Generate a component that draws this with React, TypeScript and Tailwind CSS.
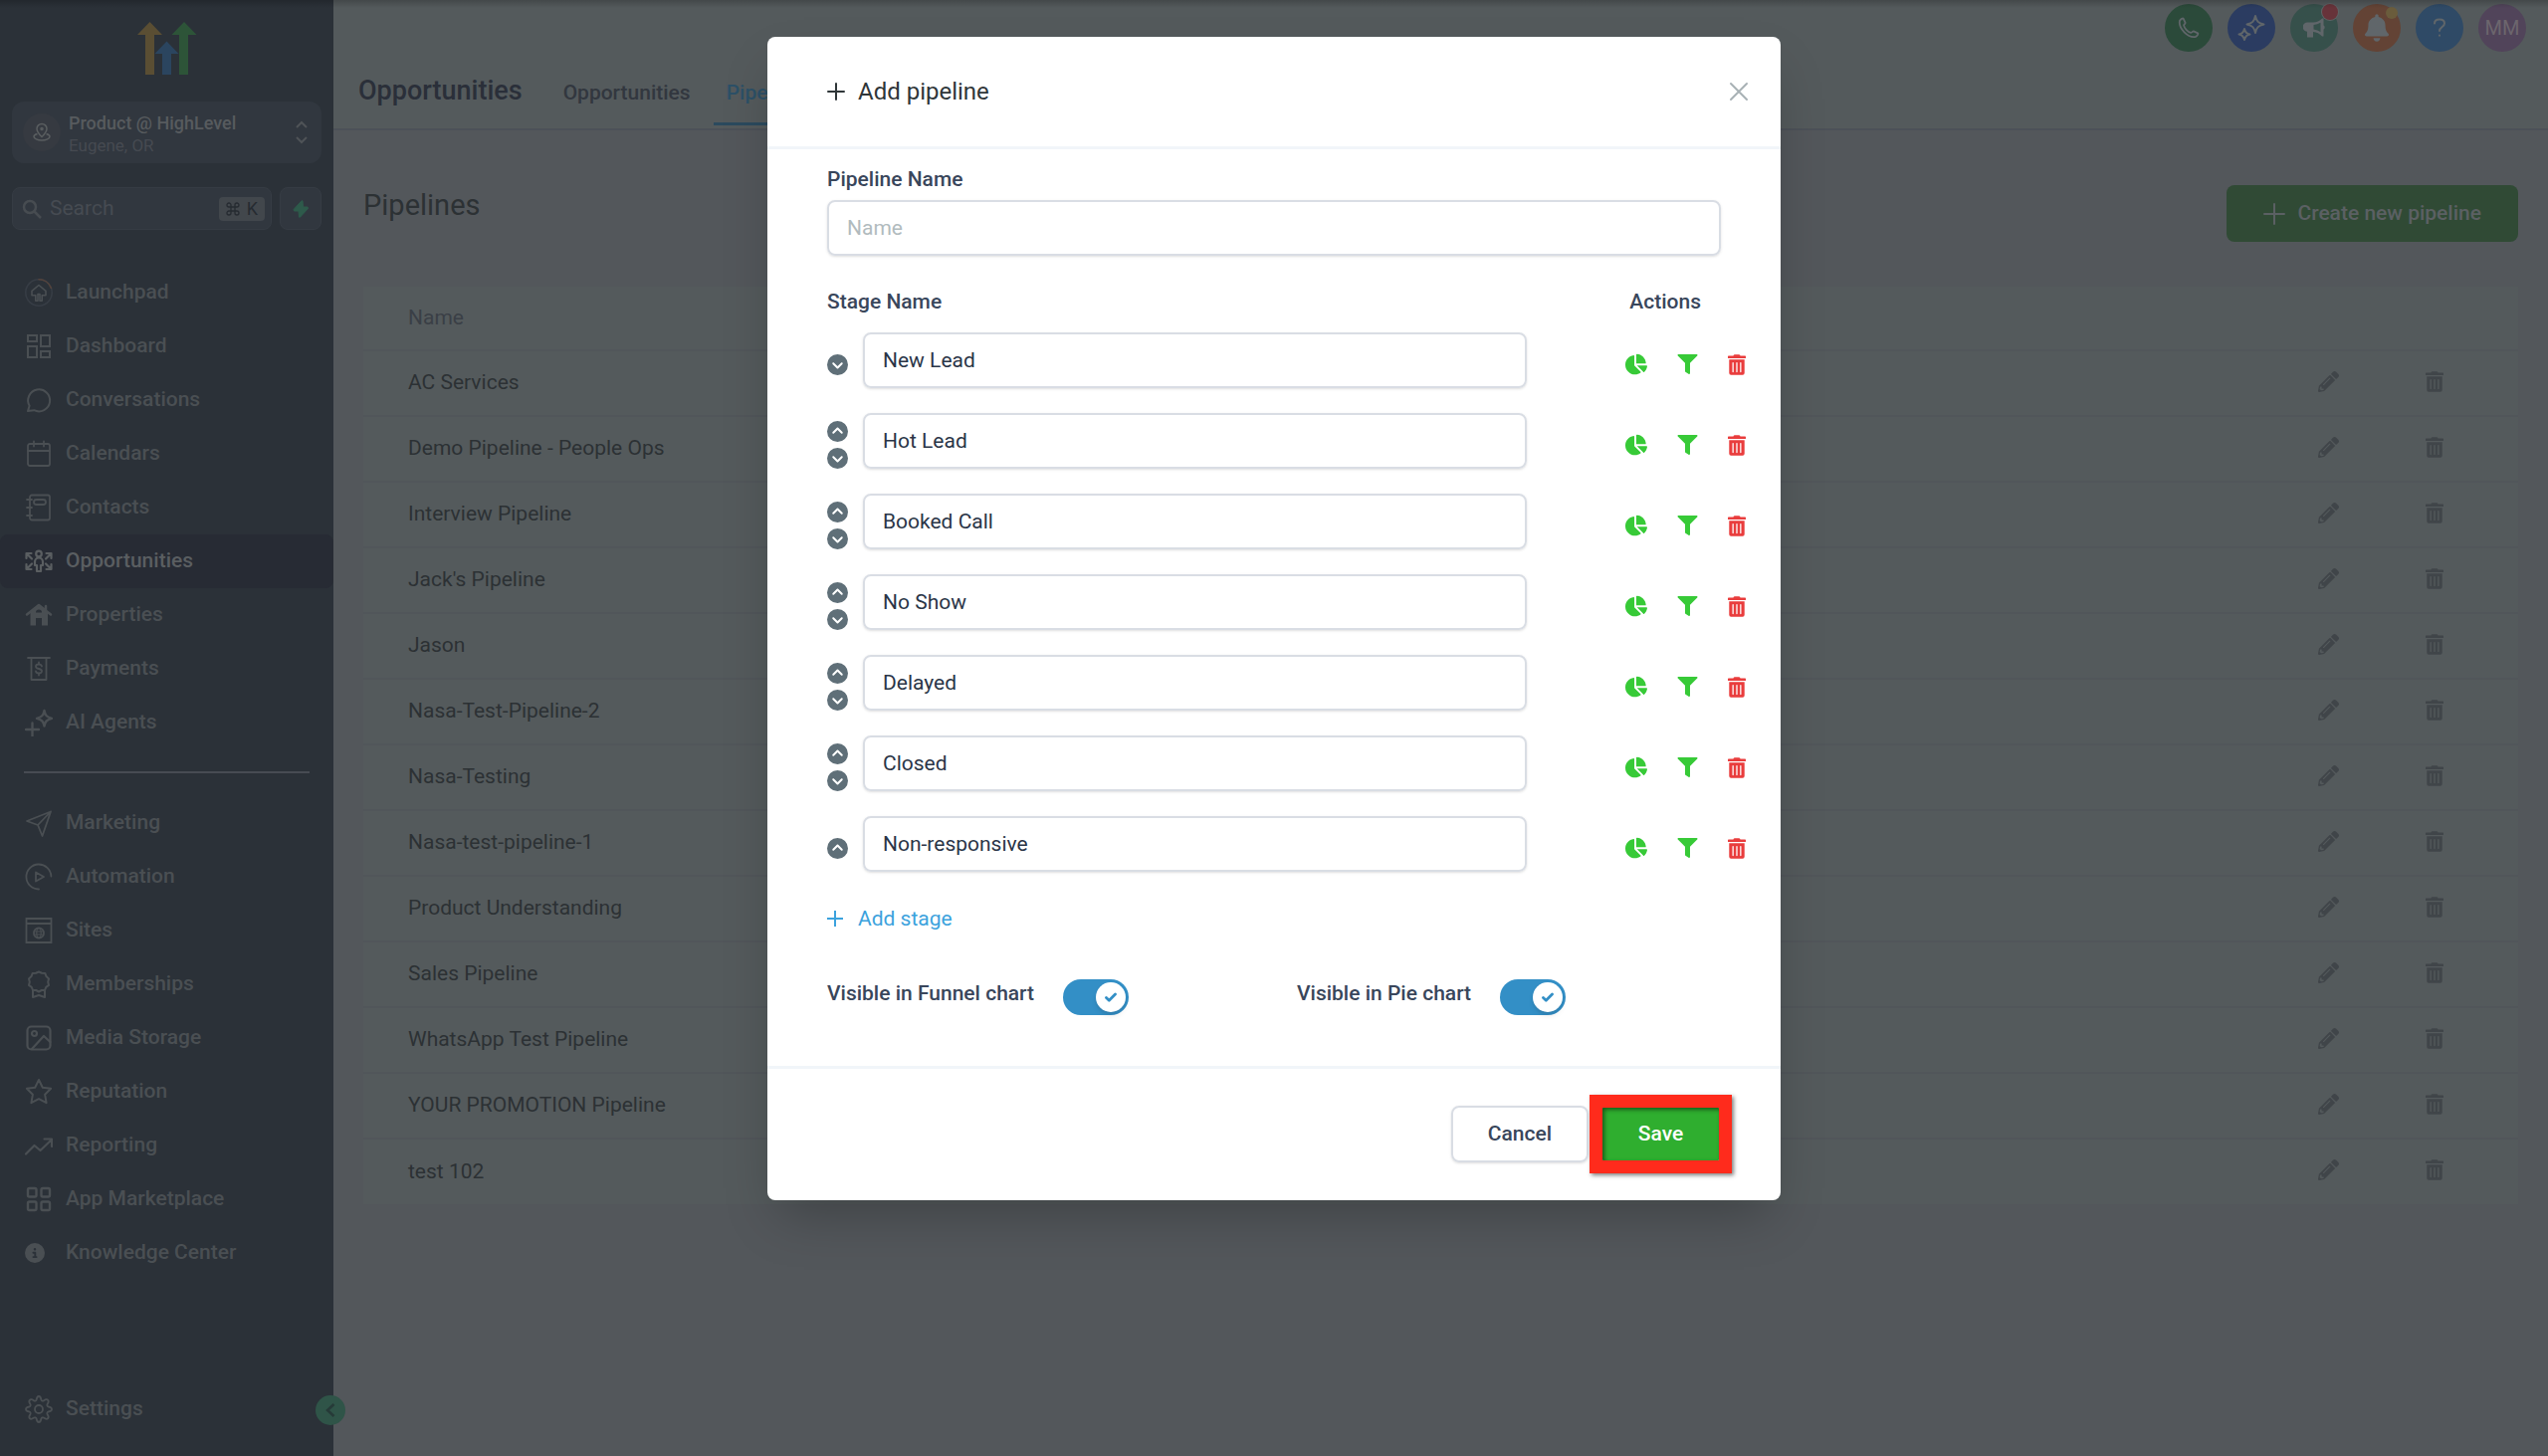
import React, { useState } from 'react';
import { FaCircleChevronDown, FaCircleChevronUp, FaCircleInfo } from 'react-icons/fa6';
import { FaChartPie, FaFilter, FaTrashAlt, FaPencilAlt, FaBell } from 'react-icons/fa';

const Icon: React.FC<{ children: React.ReactNode; width?: number }> = ({ children, width = 2 }) => (
    <svg viewBox="0 0 28 28" className="w-7 h-7 shrink-0" fill="none" stroke="currentColor" strokeWidth={width} strokeLinejoin="round" strokeLinecap="round" aria-hidden="true">
        {children}
    </svg>
);

interface NavItem {
    label: string;
    icon: React.ReactNode;
}

const mainNav: NavItem[] = [
    {
        label: 'Launchpad',
        icon: (
            <Icon width={1.6}>
                <circle cx="14" cy="14" r="13.2" stroke="#373d45" />
                <path d="M14 .8a13.2 13.2 0 0 1 12.300 8.500" stroke="#54433c" />
                <path d="M14 6.500 7 12.400v4.400h3.800v5.400h2.200v-6.600h2v6.600h2.200v-5.400H21v-4.400z" />
            </Icon>
        ),
    },
    {
        label: 'Dashboard',
        icon: (
            <Icon>
                <path strokeLinejoin="miter" d="M3 3h9v6H3zM16 3h9v11h-9zM3 14h9v11H3zM16 19h9v6h-9z" />
            </Icon>
        ),
    },
    {
        label: 'Conversations',
        icon: (
            <Icon>
                <path d="M3 25l1.600-5.200A11 11 0 1 1 9.200 24.200z" />
            </Icon>
        ),
    },
    {
        label: 'Calendars',
        icon: (
            <Icon width={1.8}>
                <rect x="3" y="4" width="22" height="22" rx="2" />
                <path d="M3 11h22M9 1.500v5M19 1.500v5" />
            </Icon>
        ),
    },
    {
        label: 'Contacts',
        icon: (
            <Icon width={1.8}>
                <rect x="5" y="1.500" width="20" height="25" rx="2" />
                <rect x="9" y="6" width="12" height="5" rx="2.500" />
                <path d="M2 6h5M2 14h5M2 22h5" />
            </Icon>
        ),
    },
    {
        label: 'Opportunities',
        icon: (
            <Icon width={2.2}>
                <circle cx="14" cy="6.500" r="2.800" />
                <path d="M12 24v-6h-2v-3.500a4 4 0 0 1 8 0V18h-2v6z" />
                <path d="M1.500 11V6h5M2 6.500l5 5M26.500 11V6h-5M26 6.500l-5 5M1.500 17v5h5M2 21.500l5-5M26.500 17v5h-5M26 21.500l-5-5" />
            </Icon>
        ),
    },
    {
        label: 'Properties',
        icon: (
            <Icon width={1.8}>
                <path d="M2 13.500 14 4l12 9.500M21 5v5" strokeWidth="2.500" />
                <path fill="currentColor" fillRule="evenodd" stroke="none" d="M14 4.500 5.500 11v13.500H11V17h6v7.500h6V11zm0 4a3 3 0 0 1 3 3h-6a3 3 0 0 1 3-3z" />
            </Icon>
        ),
    },
    {
        label: 'Payments',
        icon: (
            <Icon width={1.8}>
                <path d="M3 3h22M6.500 3v22h15V3" />
                <path d="M17 11.500c-.4-1.400-1.500-2-3-2-1.800 0-3 .8-3 2.200 0 3.200 6 1.400 6 4.600 0 1.400-1.200 2.200-3 2.200-1.500 0-2.700-.6-3-2M14 7.500v2M14 18.500v2" />
            </Icon>
        ),
    },
    {
        label: 'AI Agents',
        icon: (
            <Icon width={2.4}>
                <path d="M19.500 2c1 5 2.500 6.500 7.500 7.800-5 1.300-6.500 2.800-7.500 7.800-1-5-2.500-6.500-7.500-7.800 5-1.300 6.500-2.800 7.500-7.800zM1 21h13M7.500 14.500v13" />
            </Icon>
        ),
    },
];

const moreNav: NavItem[] = [
    {
        label: 'Marketing',
        icon: (
            <Icon width={1.8}>
                <path d="M2 12 26 2.500 17.500 27l-4.500-11zM26 2.500 13 16" />
            </Icon>
        ),
    },
    {
        label: 'Automation',
        icon: (
            <Icon width={1.8}>
                <path d="M14 26.500a12.500 12.500 0 1 1 12.400-13M11 9.500l8 4.500-8 4.500z" />
            </Icon>
        ),
    },
    {
        label: 'Sites',
        icon: (
            <Icon width={1.8}>
                <path strokeLinejoin="miter" d="M1.500 2h25v24h-25zM1.500 7h25" />
                <circle cx="14" cy="16.500" r="5" />
                <ellipse cx="14" cy="16.500" rx="2.200" ry="5" strokeWidth="1.200" />
                <path strokeWidth="1.200" d="M9 15h10M9 18h10" />
            </Icon>
        ),
    },
    {
        label: 'Memberships',
        icon: (
            <Icon>
                <path d="M14 1.500l3 1.200 3.300.2 1.200 3.200 2.500 2.300-.8 3.300.8 3.200-2.700 2-1.300 3-3.200.1L14 21.500l-2.800-1.500-3.200-.1-1.300-3-2.700-2 .8-3.200-.8-3.300 2.500-2.300 1.200-3.200 3.300-.2zM8 20v7l6-2 6 2v-7" />
            </Icon>
        ),
    },
    {
        label: 'Media Storage',
        icon: (
            <Icon width={2.2}>
                <rect x="2.500" y="2.500" width="23" height="23" rx="4" />
                <circle cx="9.500" cy="9.500" r="2.500" />
                <path d="M7 25l12-13 6.500 6" />
            </Icon>
        ),
    },
    {
        label: 'Reputation',
        icon: (
            <Icon>
                <path d="M14 2l3.800 7.700 8.300 1.100-6 5.900 1.500 8.500L14 21.200l-7.600 4 1.500-8.500-6-5.900 8.300-1.100z" />
            </Icon>
        ),
    },
    {
        label: 'Reporting',
        icon: (
            <Icon width={2.2}>
                <path d="M1 22.500l8.500-8.500 6 5L27 8M19.500 7.500H27V15" />
            </Icon>
        ),
    },
    {
        label: 'App Marketplace',
        icon: (
            <Icon width={2.4}>
                <rect x="3" y="3" width="8.500" height="8.500" rx="1.500" />
                <rect x="16.500" y="3" width="8.500" height="8.500" rx="1.500" />
                <rect x="3" y="16.500" width="8.500" height="8.500" rx="1.500" />
                <rect x="16.500" y="16.500" width="8.500" height="8.500" rx="1.500" />
            </Icon>
        ),
    },
    { label: 'Knowledge Center', icon: <span className="w-7 shrink-0"><FaCircleInfo className="w-5 h-5" /></span> },
];

const settings: NavItem = {
    label: 'Settings',
    icon: (
        <Icon width={1.8}>
            <circle cx="14" cy="14" r="4" />
            <path d="M11.600 4.500C12 2 12.700 1 14 1s2 1 2.400 3.500c.3 1 1.500 1.500 2.400.9C21 3.800 22.200 3.600 23.200 4.800c.9 1 .8 2.200-.7 4.300-.5.900 0 2.100 1 2.400 2.600.4 3.500 1.200 3.500 2.500s-.9 2.100-3.500 2.500c-1 .3-1.500 1.500-1 2.400 1.500 2.100 1.600 3.300.7 4.300-1 1.200-2.200 1-4.400-.6-.9-.6-2.100-.1-2.400.9C16 26 15.300 27 14 27s-2-1-2.400-3.500c-.3-1-1.500-1.500-2.400-.9-2.200 1.600-3.400 1.800-4.400.6-.9-1-.8-2.200.7-4.300.5-.9 0-2.100-1-2.400C1.900 16.100 1 15.300 1 14s.9-2.100 3.500-2.500c1-.3 1.500-1.500 1-2.400C4 7 3.900 5.800 4.800 4.800c1-1.200 2.200-1 4.400.6.900.6 2.100.1 2.400-.9z" />
        </Icon>
    ),
};

const pipelines = [
    'AC Services',
    'Demo Pipeline - People Ops',
    'Interview Pipeline',
    "Jack's Pipeline",
    'Jason',
    'Nasa-Test-Pipeline-2',
    'Nasa-Testing',
    'Nasa-test-pipeline-1',
    'Product Understanding',
    'Sales Pipeline',
    'WhatsApp Test Pipeline',
    'YOUR PROMOTION Pipeline',
    'test 102',
];

const defaultStages = ['New Lead', 'Hot Lead', 'Booked Call', 'No Show', 'Delayed', 'Closed', 'Non-responsive'];

const NavLink: React.FC<{ item: NavItem; active?: boolean }> = ({ item, active }) => (
    <a
        href="#"
        className={`flex items-center gap-[13px] h-[54px] pl-[25px] rounded-lg text-[21px] font-medium ${active ? 'bg-[#272b34] text-[#5a5e61]' : 'text-[#4a4f53]'}`}
    >
        {item.icon}
        {item.label}
    </a>
);

const Sidebar: React.FC = () => (
    <aside className="relative flex flex-col w-[335px] shrink-0 bg-[#2b3138] pb-5">
        <svg viewBox="0 0 60 54" className="w-[60px] h-[54px] mx-auto mt-[22px]" aria-hidden="true">
            <path fill="#5a4e33" d="M0 13 12.500 0 25 13h-8v40H8V13z" />
            <path fill="#2d5438" d="M34.500 13 47 0l12.500 13H51v40h-9V13z" />
            <path fill="#2b455f" d="M17.500 32 29.500 19.500 41.500 32H34v21h-9V32z" />
        </svg>

        <button type="button" className="flex items-center h-[62px] mt-[26px] mx-3 pl-[11px] pr-[14px] rounded-xl bg-[#31373f] text-left">
            <span className="flex items-center justify-center w-[38px] h-[38px] rounded-full bg-[#363a41] text-[#5a5e60]">
                <svg viewBox="0 0 20 20" className="w-5 h-5" fill="none" stroke="currentColor" strokeWidth="1.5" aria-hidden="true">
                    <path d="M10 14.500C7 11.500 5 9.300 5 6.400a5 5 0 0 1 10 0c0 2.900-2 5.100-5 8.100z" />
                    <circle cx="10" cy="6.500" r="1" />
                    <path d="M5.500 11.500C3.500 12 2 13 2 14.300 2 16.200 5.600 18 10 18s8-1.800 8-3.700c0-1.300-1.500-2.300-3.500-2.800" />
                </svg>
            </span>
            <span className="flex-1 ml-2 pt-[3px]">
                <span className="block text-lg leading-[23px] font-medium text-[#575b5e]">Product @ HighLevel</span>
                <span className="block text-[17px] leading-[22px] text-[#464a51]">Eugene, OR</span>
            </span>
            <svg viewBox="0 0 12 24" className="w-3 h-6" fill="none" stroke="#4f5357" strokeWidth="2" aria-hidden="true">
                <path d="M1 7l5-5 5 5M1 17l5 5 5-5" />
            </svg>
        </button>

        <div className="flex gap-2 mt-6 mx-3">
            <label className="flex flex-1 min-w-0 items-center h-[43px] pl-[9px] pr-[6px] rounded-lg border border-[#363c44] bg-[#31373f] text-[#474c51]">
                <svg viewBox="0 0 20 20" className="w-5 h-5 shrink-0" fill="none" stroke="currentColor" strokeWidth="2.500" aria-hidden="true">
                    <circle cx="8" cy="8" r="6" />
                    <path d="M12.500 12.500 19 19" />
                </svg>
                <input type="search" aria-label="Search" placeholder="Search" className="flex-1 w-full min-w-0 ml-2 text-[21px] placeholder:text-[#464b52] outline-none" />
                <kbd className="flex shrink-0 items-center gap-[7px] h-6 px-[7px] rounded-sm bg-[#42474c] text-[#262b31] font-['Roboto',sans-serif] text-lg">
                    <svg viewBox="0 0 14 14" className="w-[14px] h-[14px]" fill="none" stroke="currentColor" strokeWidth="1.300" aria-hidden="true">
                        <path d="M5 5V3a2 2 0 1 0-2 2h8a2 2 0 1 0-2-2v8a2 2 0 1 0 2-2H3a2 2 0 1 0 2 2z" />
                    </svg>
                    K
                </kbd>
            </label>
            <button type="button" aria-label="Quick actions" className="flex shrink-0 items-center justify-center w-[42px] h-[43px] rounded-lg border border-[#363c44] bg-[#31373f]">
                <svg viewBox="0 0 16 18" className="w-4 h-[18px]" fill="#2e5a4b" stroke="#2e5a4b" strokeLinejoin="round" aria-hidden="true">
                    <path d="M9 .8 1 9.500 1.500 11H6l.5 6.200h1l8-8.700-.5-1.500h-4.500L10 .8z" />
                </svg>
            </button>
        </div>

        <nav className="mt-9">
            {mainNav.map(item => (
                <NavLink key={item.label} item={item} active={item.label === 'Opportunities'} />
            ))}
            <hr className="mx-6 mt-[22px] mb-[23px] border-t-2 border-[#474b53]" />
            {moreNav.map(item => (
                <NavLink key={item.label} item={item} />
            ))}
        </nav>

        <div className="mt-auto">
            <NavLink item={settings} />
        </div>

        <button type="button" aria-label="Collapse sidebar" className="absolute -right-3 bottom-[31px] flex items-center justify-center w-[30px] h-[30px] rounded-full bg-[#2f5448]">
            <svg viewBox="0 0 10 14" className="w-[10px] h-[14px]" fill="none" stroke="#263a38" strokeWidth="2.500" aria-hidden="true">
                <path d="M8.500 1 2 7l6.500 6" />
            </svg>
        </button>
    </aside>
);

const HeaderActions: React.FC = () => (
    <div className="flex gap-[15px] pt-1 pr-[22px] text-[#60666a]">
        <button type="button" aria-label="Call" className="flex items-center justify-center w-12 h-12 rounded-full bg-[#2b4a3a]">
            <svg viewBox="0 0 22 22" className="w-[22px] h-[22px]" fill="none" stroke="currentColor" strokeWidth="1.800" strokeLinejoin="round" aria-hidden="true">
                <path d="M2 3.800C3 2.200 5 1 5.600 1.600l2 4.200c.3.800-1.600 1.900-1.500 2.800.6 2.800 4.200 6.600 7 7.300.9.100 2-1.800 2.800-1.500l4.300 2c.7.600-.6 2.600-2.200 3.500C10.500 21.500.3 11.500 2 3.800z" />
            </svg>
        </button>
        <button type="button" aria-label="Assistant" className="flex items-center justify-center w-12 h-12 rounded-full bg-[#2b3c61]">
            <svg viewBox="0 0 28 28" className="w-7 h-7" fill="none" stroke="currentColor" strokeWidth="2" strokeLinejoin="round" aria-hidden="true">
                <path d="M18 2c1.200 5.500 3 7.300 8.500 8.500C21 11.700 19.200 13.500 18 19c-1.200-5.500-3-7.300-8.500-8.500C15 9.300 16.800 7.500 18 2zM7 15c.8 3.600 2 4.800 5.500 5.500C9 21.200 7.800 22.400 7 26c-.8-3.600-2-4.800-5.500-5.500C5 19.800 6.200 18.600 7 15z" />
            </svg>
        </button>
        <button type="button" aria-label="Announcements" className="relative flex items-center justify-center w-12 h-12 rounded-full bg-[#36504b]">
            <svg viewBox="0 0 22 22" className="w-[22px] h-[22px]" aria-hidden="true">
                <path fill="currentColor" fillRule="evenodd" d="M19 1.500h1.500v18H19c-2.500-2.800-5.500-4.200-9-4.500v5.500H4V14.800A4.500 4.500 0 0 1 4.500 5.500H10c3.500 0 6.500-1.300 9-4zM17.500 5.800a16 16 0 0 1-7 2.300v4.500c2.800.4 5 1.300 7 2.700zM20.500 8.500c1.500.5 1.500 3.500 0 4z" />
            </svg>
            <span className="absolute right-0 top-0 w-4 h-4 rounded-full bg-[#67333a] ring-1 ring-[#5f6466]" />
        </button>
        <button type="button" aria-label="Notifications" className="relative flex items-center justify-center w-12 h-12 rounded-full bg-[#634335]">
            <FaBell className="w-6 h-7" />
            <span className="absolute right-[3px] top-[3px] w-3 h-3 rounded-full bg-[#6a5c3c]" />
        </button>
        <button type="button" aria-label="Help" className="flex items-center justify-center w-12 h-12 rounded-full bg-[#2f4a66]">
            <svg viewBox="0 0 14 20" className="w-[14px] h-5" fill="none" stroke="currentColor" strokeWidth="2" strokeLinecap="round" aria-hidden="true">
                <path d="M2 5.500C2 3 4 1.500 7 1.500s5 1.500 5 4c0 3.500-5 3.500-5 7.500M7 17.500v.2" />
            </svg>
        </button>
        <button type="button" className="w-12 h-12 rounded-full bg-[#51445a] text-xl text-[#6c666d]">MM</button>
    </div>
);

const StageRow: React.FC<{ name: string; first: boolean; last: boolean; onChange: (value: string) => void; onRemove: () => void }> = ({ name, first, last, onChange, onRemove }) => (
    <li className="flex items-center h-14">
        <div className="flex flex-col gap-[6px] w-9 pt-2 text-[#5f6f78]">
            {!first && (
                <button type="button" aria-label={`Move ${name} up`} className="w-[21px]"><FaCircleChevronUp className="w-[21px] h-[21px]" /></button>
            )}
            {!last && (
                <button type="button" aria-label={`Move ${name} down`} className="w-[21px]"><FaCircleChevronDown className="w-[21px] h-[21px]" /></button>
            )}
        </div>
        <input
            type="text"
            aria-label="Stage name"
            value={name}
            onChange={e => onChange(e.target.value)}
            className="flex-1 min-w-0 h-14 px-[18px] rounded-lg border-2 border-[#d9dde4] shadow-sm text-[21px] text-[#2a3547] outline-none"
        />
        <div className="flex items-center gap-[30px] ml-[99px] pt-2 text-[#37ca37]">
            <button type="button" aria-label="Show in pie chart"><FaChartPie className="w-[22px] h-[22px]" /></button>
            <button type="button" aria-label="Show in funnel chart"><FaFilter className="w-[21px] h-5" /></button>
            <button type="button" aria-label={`Delete ${name}`} onClick={onRemove} className="text-[#e93d3d]"><FaTrashAlt className="w-[18px] h-[21px]" /></button>
        </div>
    </li>
);

const Toggle: React.FC<{ id: string; label: string }> = ({ id, label }) => {
    const [on, setOn] = useState(true);
    return (
        <div className="flex items-start gap-[29px]">
            <label htmlFor={id} className="text-[21px] leading-7 font-medium text-[#39465b]">{label}</label>
            <span className="relative flex w-[66px] h-9">
                <input
                    id={id}
                    type="checkbox"
                    role="switch"
                    checked={on}
                    onChange={() => setOn(!on)}
                    className="appearance-none w-full h-full rounded-full bg-gray-300 checked:bg-[#338fc6]"
                />
                <span className={`pointer-events-none absolute top-[3px] flex items-center justify-center w-[30px] h-[30px] rounded-full bg-white shadow-md ${on ? 'right-[3px]' : 'left-[3px]'}`}>
                    {on && (
                        <svg viewBox="0 0 12 10" className="w-3 h-[10px]" fill="none" stroke="#338fc6" strokeWidth="2.800" strokeLinecap="round" strokeLinejoin="round" aria-hidden="true">
                            <path d="M1.500 5.500 4.300 8.200 10.500 2" />
                        </svg>
                    )}
                </span>
            </span>
        </div>
    );
};

const AddPipelineModal: React.FC = () => {
    const [name, setName] = useState('');
    const [stages, setStages] = useState(defaultStages);

    return (
        <div className="absolute inset-0 flex items-start justify-center pt-[37px]">
            <form role="dialog" aria-label="Add pipeline" onSubmit={e => e.preventDefault()} className="w-full max-w-[1018px] rounded-lg bg-white shadow-2xl">
                <div className="flex items-center justify-between py-[39px] pl-[60px] pr-[32px] border-b-3 border-[#f1f5f9]">
                    <h2 className="flex items-center gap-[13px] text-2xl leading-8 text-[#2f3639]">
                        <svg viewBox="0 0 18 18" className="w-[18px] h-[18px]" stroke="currentColor" strokeWidth="2" strokeLinecap="round" aria-hidden="true">
                            <path d="M9 1v16M1 9h16" />
                        </svg>
                        Add pipeline
                    </h2>
                    <button type="button" aria-label="Close">
                        <svg viewBox="0 0 20 20" className="w-5 h-5" stroke="#a8b1b5" strokeWidth="2" strokeLinecap="round" aria-hidden="true">
                            <path d="M2 2l16 16M18 2 2 18" />
                        </svg>
                    </button>
                </div>

                <div className="pt-4 pb-[51px] pl-[60px] border-b-3 border-[#f1f5f9]">
                    <div className="pr-[60px]">
                        <label htmlFor="pipeline-name" className="block text-[21px] leading-7 font-medium text-[#39465b]">Pipeline Name</label>
                        <input
                            id="pipeline-name"
                            type="text"
                            placeholder="Name"
                            value={name}
                            onChange={e => setName(e.target.value)}
                            className="block w-full h-14 mt-[7px] px-[18px] rounded-lg border-2 border-[#d9dde4] shadow-sm text-[21px] text-[#2a3547] placeholder:text-[#b1bbbe] outline-none"
                        />
                    </div>

                    <div className="flex justify-between mt-8 pr-[80px] text-[21px] leading-7 font-medium text-[#39465b]">
                        <span>Stage Name</span>
                        <span>Actions</span>
                    </div>
                    <ul className="flex flex-col gap-[25px] mt-[17px] pr-[35px]">
                        {stages.map((stage, i) => (
                            <StageRow
                                key={i}
                                name={stage}
                                first={i === 0}
                                last={i === stages.length - 1}
                                onChange={value => setStages(stages.map((s, j) => (j === i ? value : s)))}
                                onRemove={() => setStages(stages.filter((_, j) => j !== i))}
                            />
                        ))}
                    </ul>

                    <button type="button" onClick={() => setStages([...stages, ''])} className="flex items-center gap-[15px] mt-[33px] text-[21px] leading-7 text-[#3ba2dd]">
                        <svg viewBox="0 0 16 16" className="w-4 h-4" stroke="currentColor" strokeWidth="2" aria-hidden="true">
                            <path d="M8 0v16M0 8h16" />
                        </svg>
                        Add stage
                    </button>

                    <div className="grid grid-cols-2 mt-[47px] pr-[14px]">
                        <Toggle id="funnel-chart" label="Visible in Funnel chart" />
                        <Toggle id="pie-chart" label="Visible in Pie chart" />
                    </div>
                </div>

                <div className="flex justify-end gap-3 pt-[37px] pb-[38px] pr-[60px]">
                    <button type="button" className="w-[138px] h-[57px] rounded-lg border-2 border-[#d9dde4] shadow-sm text-[21px] font-medium text-[#39465b]">Cancel</button>
                    <button type="submit" className="relative w-[121px] h-[57px] rounded-lg bg-[#2fae2f] text-[21px] font-medium text-white">
                        Save
                        <span className="absolute -inset-[11px] border-[13px] border-[#ff2b1c] shadow-[2px_2px_4px_rgba(0,0,0,0.5),inset_2px_2px_4px_rgba(0,0,0,0.5)]" />
                    </button>
                </div>
            </form>
        </div>
    );
};

export default function App() {
    return (
        <div className="relative flex min-h-screen overflow-hidden bg-[#53575b] font-['Roboto',sans-serif]">
            <Sidebar />
            <main className="flex-1 min-w-0">
                <header className="flex items-start justify-between border-b-2 border-[#4c5158] bg-[#545a5c]">
                    <div className="flex items-start gap-7 pt-[75px] pb-[3px] pl-[25px]">
                        <h1 className="text-[27px] leading-8 font-medium text-[#2a2f39]">Opportunities</h1>
                        <nav className="flex gap-[10px] pt-[6px] text-[21px] leading-6 font-medium">
                            <a href="#" className="px-[13px] pb-[18px] border-b-3 border-transparent text-[#32373f]">Opportunities</a>
                            <a href="#" className="px-[13px] pb-[18px] border-b-3 border-[#2b4a5e] text-[#2c5067]">Pipelines</a>
                        </nav>
                    </div>
                    <HeaderActions />
                </header>

                <section className="pl-[30px] pr-[30px] pt-[55px]">
                    <div className="flex items-start justify-between">
                        <h2 className="text-[29px] leading-10 text-[#2c3134]">Pipelines</h2>
                        <button type="button" className="flex items-center gap-3 h-[57px] px-[37px] rounded-lg bg-[#304a35] text-[21px] font-medium text-[#5b6063]">
                            <svg viewBox="0 0 22 22" className="w-[22px] h-[22px]" stroke="currentColor" strokeWidth="2" strokeLinecap="round" aria-hidden="true">
                                <path d="M11 1v20M1 11h20" />
                            </svg>
                            Create new pipeline
                        </button>
                    </div>

                    <table className="w-full mt-[45px] bg-[#545a5c] text-left text-[21px]">
                        <thead>
                            <tr className="h-16 border-b-2 border-[#51565a]">
                                <th scope="col" className="pl-[45px] font-normal text-[#3a3f46]">Name</th>
                                <th scope="col" className="w-[46px]" aria-label="Edit" />
                                <th scope="col" className="w-[168px]" aria-label="Delete" />
                            </tr>
                        </thead>
                        <tbody>
                            {pipelines.map(pipeline => (
                                <tr key={pipeline} className="h-[66px] border-b-2 border-[#51565a] last:border-b-0">
                                    <td className="pl-[45px] text-[#2c3134]">{pipeline}</td>
                                    <td className="pb-1 text-[#404549]">
                                        <button type="button" aria-label={`Edit ${pipeline}`} className="block mx-auto"><FaPencilAlt className="w-[21px] h-[21px]" /></button>
                                    </td>
                                    <td className="pb-1 text-[#404549]">
                                        <button type="button" aria-label={`Delete ${pipeline}`} className="block mx-auto"><FaTrashAlt className="w-[18px] h-[21px]" /></button>
                                    </td>
                                </tr>
                            ))}
                        </tbody>
                    </table>
                </section>
            </main>
            <div className="pointer-events-none absolute inset-x-0 top-0 h-2 bg-gradient-to-b from-black/20 to-transparent" />
            <AddPipelineModal />
        </div>
    );
}
